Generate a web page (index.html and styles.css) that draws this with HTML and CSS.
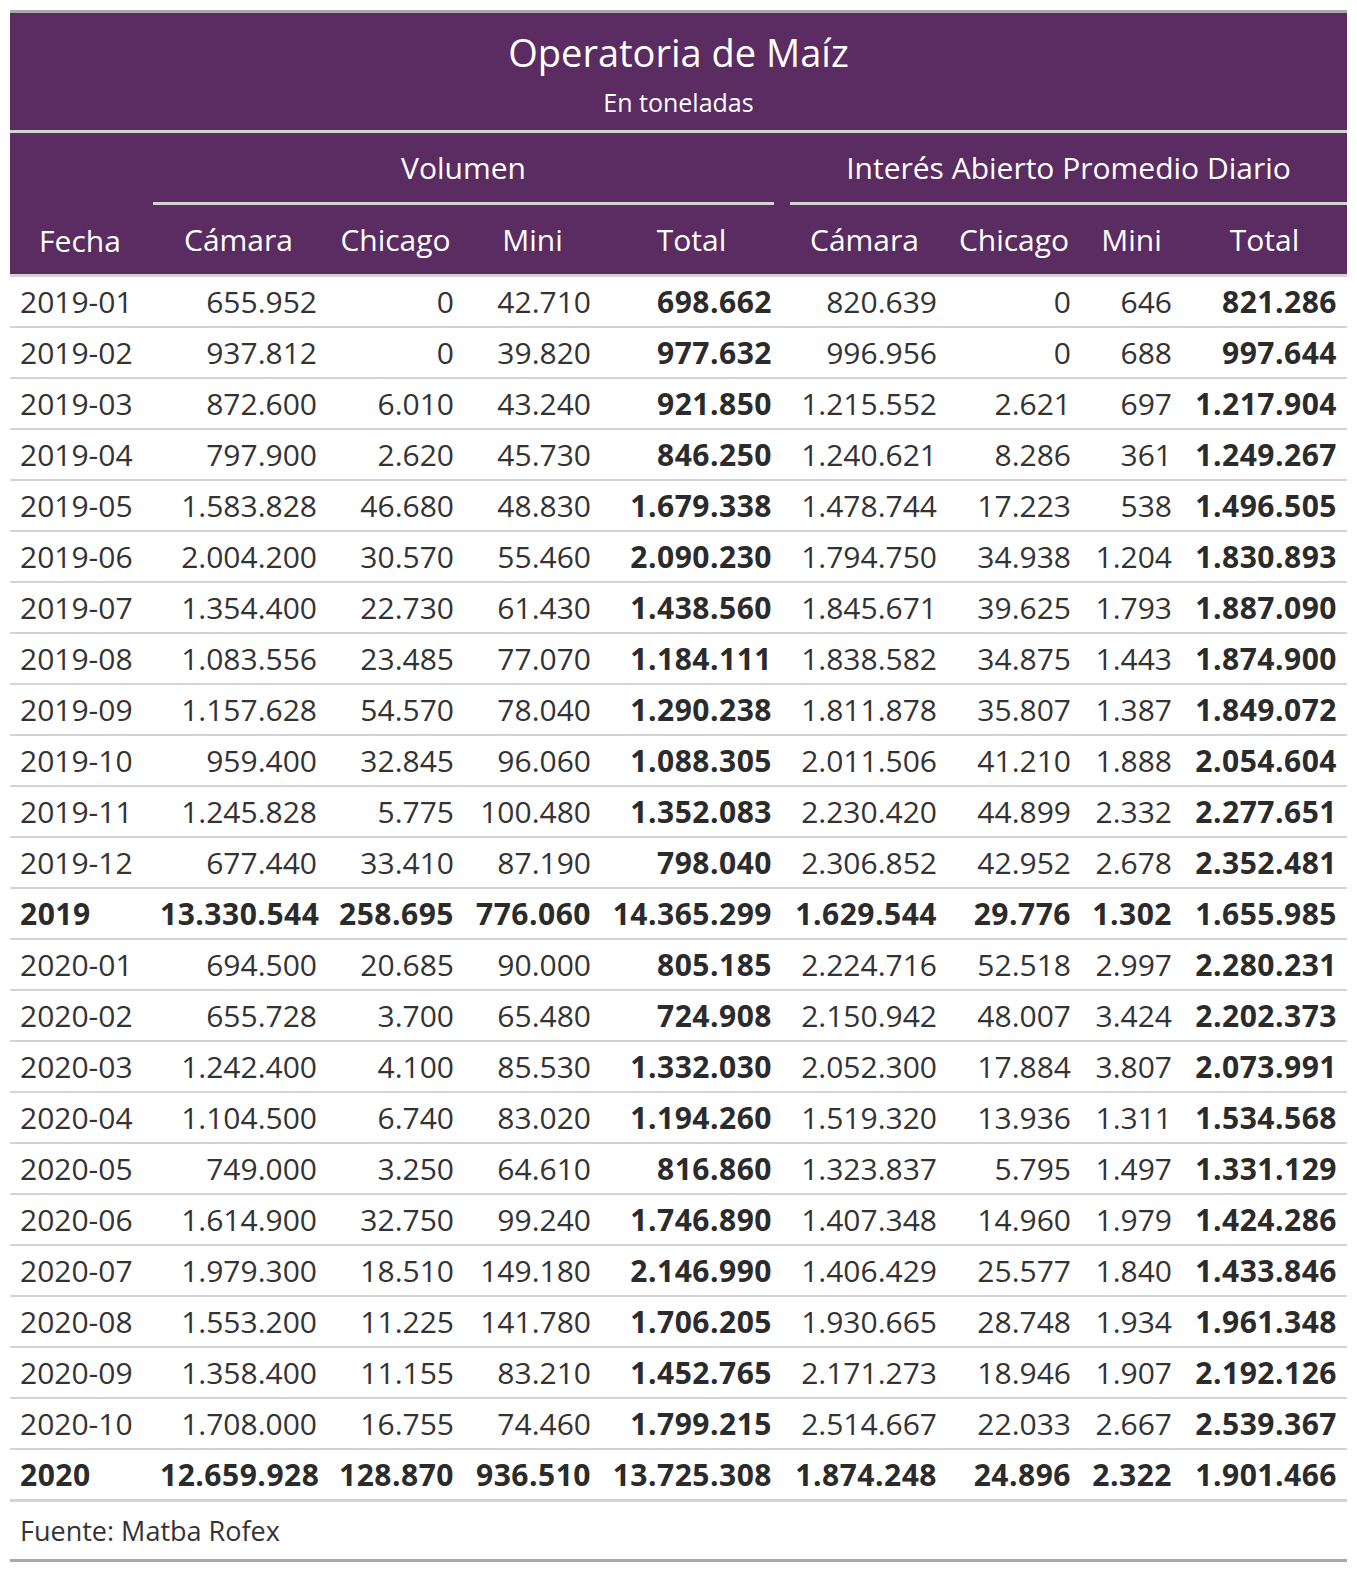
FILE: index.html
```html
<!DOCTYPE html>
<html lang="es">
<head>
<meta charset="utf-8">
<title>Operatoria de Maíz</title>
<link rel="stylesheet" href="styles.css">
</head>
<body>
<table class="gt">
  <colgroup>
    <col class="c-fecha"><col class="c-cam"><col class="c-chi"><col class="c-mini"><col class="c-tot">
    <col class="c-cam2"><col class="c-chi2"><col class="c-mini2"><col class="c-tot2">
  </colgroup>
  <thead>
    <tr class="heading">
      <th colspan="9">
        <div class="title">Operatoria de Maíz</div>
        <div class="subtitle">En toneladas</div>
      </th>
    </tr>
    <tr class="spanners">
      <th rowspan="2" class="lbl fecha-lbl">Fecha</th>
      <th colspan="4" class="spanner"><span class="sp sp-vol">Volumen</span></th>
      <th colspan="4" class="spanner"><span class="sp sp-int">Interés Abierto Promedio Diario</span></th>
    </tr>
    <tr class="labels">
      <th class="lbl">Cámara</th><th class="lbl">Chicago</th><th class="lbl">Mini</th><th class="lbl">Total</th>
      <th class="lbl">Cámara</th><th class="lbl">Chicago</th><th class="lbl">Mini</th><th class="lbl">Total</th>
    </tr>
  </thead>
  <tbody>
    <tr><td>2019-01</td><td>655.952</td><td>0</td><td>42.710</td><td class="b">698.662</td><td>820.639</td><td>0</td><td>646</td><td class="b">821.286</td></tr>
    <tr><td>2019-02</td><td>937.812</td><td>0</td><td>39.820</td><td class="b">977.632</td><td>996.956</td><td>0</td><td>688</td><td class="b">997.644</td></tr>
    <tr><td>2019-03</td><td>872.600</td><td>6.010</td><td>43.240</td><td class="b">921.850</td><td>1.215.552</td><td>2.621</td><td>697</td><td class="b">1.217.904</td></tr>
    <tr><td>2019-04</td><td>797.900</td><td>2.620</td><td>45.730</td><td class="b">846.250</td><td>1.240.621</td><td>8.286</td><td>361</td><td class="b">1.249.267</td></tr>
    <tr><td>2019-05</td><td>1.583.828</td><td>46.680</td><td>48.830</td><td class="b">1.679.338</td><td>1.478.744</td><td>17.223</td><td>538</td><td class="b">1.496.505</td></tr>
    <tr><td>2019-06</td><td>2.004.200</td><td>30.570</td><td>55.460</td><td class="b">2.090.230</td><td>1.794.750</td><td>34.938</td><td>1.204</td><td class="b">1.830.893</td></tr>
    <tr><td>2019-07</td><td>1.354.400</td><td>22.730</td><td>61.430</td><td class="b">1.438.560</td><td>1.845.671</td><td>39.625</td><td>1.793</td><td class="b">1.887.090</td></tr>
    <tr><td>2019-08</td><td>1.083.556</td><td>23.485</td><td>77.070</td><td class="b">1.184.111</td><td>1.838.582</td><td>34.875</td><td>1.443</td><td class="b">1.874.900</td></tr>
    <tr><td>2019-09</td><td>1.157.628</td><td>54.570</td><td>78.040</td><td class="b">1.290.238</td><td>1.811.878</td><td>35.807</td><td>1.387</td><td class="b">1.849.072</td></tr>
    <tr><td>2019-10</td><td>959.400</td><td>32.845</td><td>96.060</td><td class="b">1.088.305</td><td>2.011.506</td><td>41.210</td><td>1.888</td><td class="b">2.054.604</td></tr>
    <tr><td>2019-11</td><td>1.245.828</td><td>5.775</td><td>100.480</td><td class="b">1.352.083</td><td>2.230.420</td><td>44.899</td><td>2.332</td><td class="b">2.277.651</td></tr>
    <tr><td>2019-12</td><td>677.440</td><td>33.410</td><td>87.190</td><td class="b">798.040</td><td>2.306.852</td><td>42.952</td><td>2.678</td><td class="b">2.352.481</td></tr>
    <tr class="total"><td>2019</td><td>13.330.544</td><td>258.695</td><td>776.060</td><td>14.365.299</td><td>1.629.544</td><td>29.776</td><td>1.302</td><td>1.655.985</td></tr>
    <tr><td>2020-01</td><td>694.500</td><td>20.685</td><td>90.000</td><td class="b">805.185</td><td>2.224.716</td><td>52.518</td><td>2.997</td><td class="b">2.280.231</td></tr>
    <tr><td>2020-02</td><td>655.728</td><td>3.700</td><td>65.480</td><td class="b">724.908</td><td>2.150.942</td><td>48.007</td><td>3.424</td><td class="b">2.202.373</td></tr>
    <tr><td>2020-03</td><td>1.242.400</td><td>4.100</td><td>85.530</td><td class="b">1.332.030</td><td>2.052.300</td><td>17.884</td><td>3.807</td><td class="b">2.073.991</td></tr>
    <tr><td>2020-04</td><td>1.104.500</td><td>6.740</td><td>83.020</td><td class="b">1.194.260</td><td>1.519.320</td><td>13.936</td><td>1.311</td><td class="b">1.534.568</td></tr>
    <tr><td>2020-05</td><td>749.000</td><td>3.250</td><td>64.610</td><td class="b">816.860</td><td>1.323.837</td><td>5.795</td><td>1.497</td><td class="b">1.331.129</td></tr>
    <tr><td>2020-06</td><td>1.614.900</td><td>32.750</td><td>99.240</td><td class="b">1.746.890</td><td>1.407.348</td><td>14.960</td><td>1.979</td><td class="b">1.424.286</td></tr>
    <tr><td>2020-07</td><td>1.979.300</td><td>18.510</td><td>149.180</td><td class="b">2.146.990</td><td>1.406.429</td><td>25.577</td><td>1.840</td><td class="b">1.433.846</td></tr>
    <tr><td>2020-08</td><td>1.553.200</td><td>11.225</td><td>141.780</td><td class="b">1.706.205</td><td>1.930.665</td><td>28.748</td><td>1.934</td><td class="b">1.961.348</td></tr>
    <tr><td>2020-09</td><td>1.358.400</td><td>11.155</td><td>83.210</td><td class="b">1.452.765</td><td>2.171.273</td><td>18.946</td><td>1.907</td><td class="b">2.192.126</td></tr>
    <tr><td>2020-10</td><td>1.708.000</td><td>16.755</td><td>74.460</td><td class="b">1.799.215</td><td>2.514.667</td><td>22.033</td><td>2.667</td><td class="b">2.539.367</td></tr>
    <tr class="total last"><td>2020</td><td>12.659.928</td><td>128.870</td><td>936.510</td><td>13.725.308</td><td>1.874.248</td><td>24.896</td><td>2.322</td><td>1.901.466</td></tr>
  </tbody>
  <tfoot>
    <tr><td colspan="9" class="source">Fuente: Matba Rofex</td></tr>
  </tfoot>
</table>
</body>
</html>
```

FILE: styles.css
```css
html, body {
  margin: 0;
  padding: 0;
  background: #ffffff;
}
body {
  padding: 10px 10px 0 10px;
  font-family: "Open Sans", "Noto Sans", sans-serif;
  color: #333333;
}
.gt {
  width: 1337px;
  table-layout: fixed;
  border-collapse: collapse;
  border-top: 3px solid #a8a8a8;
  border-bottom: 3px solid #a8a8a8;
}
.c-fecha { width: 140px; }
.c-cam { width: 177px; }
.c-chi { width: 137px; }
.c-mini { width: 137px; }
.c-tot { width: 181px; }
.c-cam2 { width: 165px; }
.c-chi2 { width: 134px; }
.c-mini2 { width: 101px; }
.c-tot2 { width: 165px; }

thead th {
  background: #5b2c62;
  color: #ffffff;
  font-weight: 400;
  padding: 0;
}
.heading th {
  height: 117px;
  border-bottom: 3px solid #d3d3d3;
  text-align: center;
  vertical-align: top;
}
.title {
  font-size: 38px;
  line-height: 44px;
  padding-top: 17px;
}
.subtitle {
  font-size: 25px;
  line-height: 32px;
  padding-top: 12px;
}
.spanners th {
  height: 72px;
  vertical-align: bottom;
}
.spanner {
  text-align: center;
}
.sp {
  display: block;
  font-size: 30px;
  line-height: 40px;
  padding-bottom: 14px;
  border-bottom: 3px solid #d3d3d3;
}
.sp-vol { margin: 0 8px 0 3px; }
.sp-int { margin: 0 0 0 8px; }
.lbl {
  font-size: 30px;
  text-align: center;
  vertical-align: middle;
}
.labels th {
  height: 69px;
}
.fecha-lbl {
  vertical-align: bottom;
  padding-bottom: 13px;
}
thead tr.labels th, thead .fecha-lbl {
  border-bottom: 3px solid #d3d3d3;
}

tbody td {
  height: 49px;
  padding: 0 10px;
  font-size: 30px;
  line-height: 40px;
  text-align: right;
  white-space: nowrap;
  border-bottom: 2px solid #d3d3d3;
  vertical-align: middle;
}
tbody td:first-child {
  text-align: left;
}
tbody td.b, tbody tr.total td {
  font-weight: 700;
  letter-spacing: 0.5px;
  color: #2b2b2b;
}
tbody tr.last td {
  border-bottom: 3px solid #d3d3d3;
}
tfoot td.source {
  height: 57px;
  padding: 0 10px;
  font-size: 27px;
  text-align: left;
  vertical-align: middle;
}
```
